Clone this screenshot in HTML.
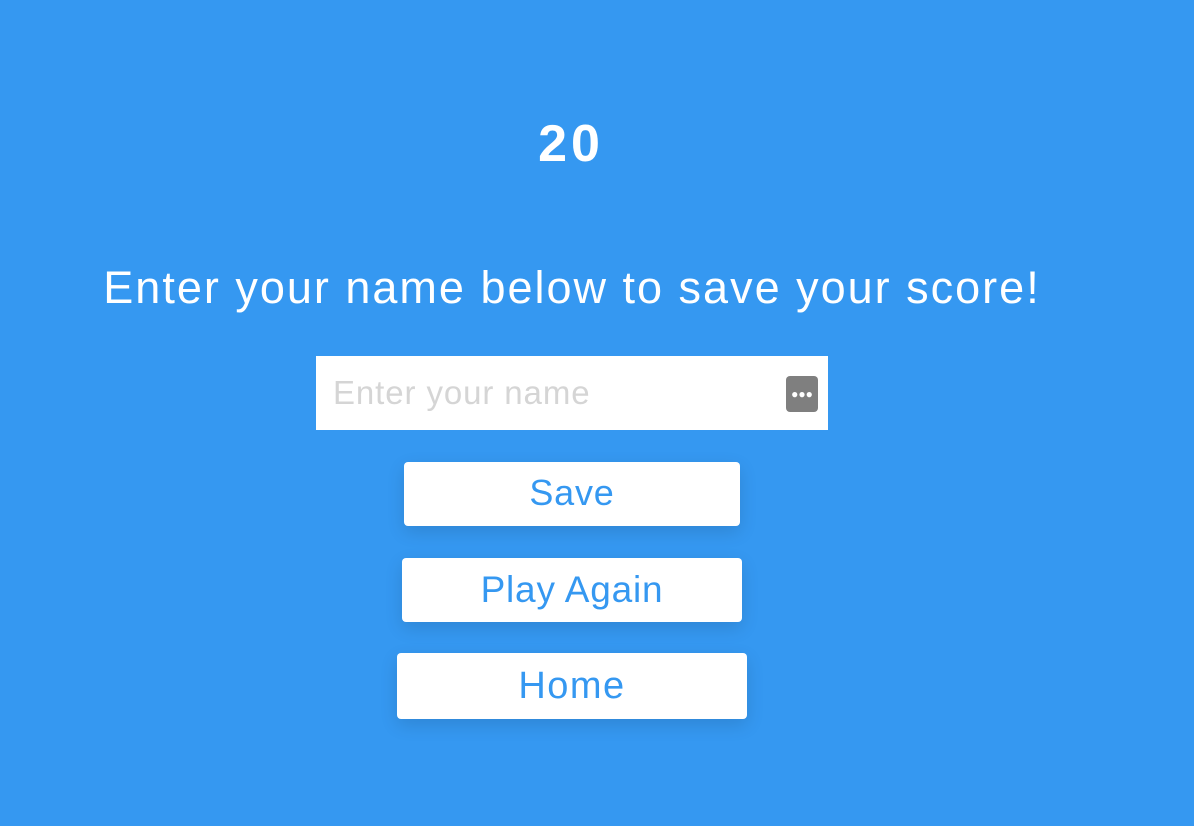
<!DOCTYPE html>
<html><head><style>
body{margin:0;width:1194px;height:826px;background:#3598f1;font-family:"Liberation Sans",sans-serif;position:relative;overflow:hidden}
.a{position:absolute;color:#fff;text-align:center}
.b{position:absolute;background:#fff;border-radius:4px;color:#3598f1;text-align:center;box-shadow:0 6px 18px rgba(0,0,0,0.12)}
</style></head><body>
<div class="a" style="left:0;width:1142px;top:114px;font-size:52px;line-height:60px;font-weight:bold;letter-spacing:4px">20</div>
<div class="a" style="left:0;width:1144px;top:262px;font-size:45px;line-height:52px;letter-spacing:2px">Enter your name below to save your score!</div>
<div style="position:absolute;left:316px;top:356px;width:512px;height:74px;background:#fff"></div>
<div style="position:absolute;left:333px;top:374px;font-size:33px;line-height:38px;color:#d5d5d5;letter-spacing:0.9px">Enter your name</div>
<div style="position:absolute;left:786px;top:376px;width:32px;height:36px;background:#7f7f7f;border-radius:4px;color:#fff;font-size:12px;line-height:36px;text-align:center;font-weight:bold">●●●</div>
<div class="b" style="left:404px;top:462px;width:336px;height:64px;line-height:62px;font-size:36px;letter-spacing:0.8px">Save</div>
<div class="b" style="left:402px;top:558px;width:340px;height:64px;line-height:64px;font-size:37px;letter-spacing:0.8px">Play Again</div>
<div class="b" style="left:397px;top:653px;width:350px;height:66px;line-height:66px;font-size:38px;letter-spacing:1.5px">Home</div>
</body></html>
